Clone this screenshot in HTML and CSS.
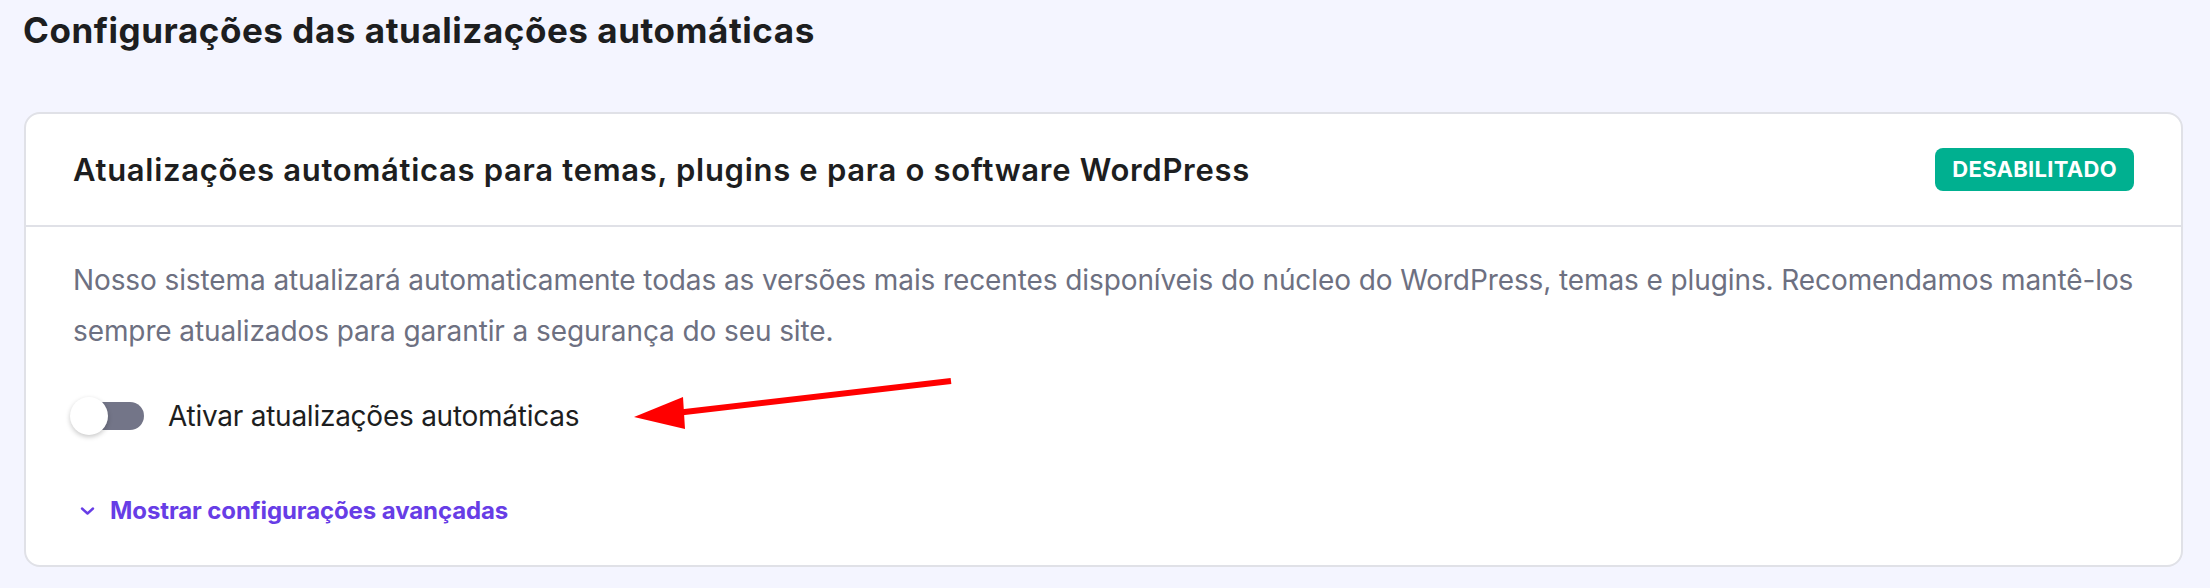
FILE: index.html
```html
<!DOCTYPE html>
<html lang="pt-BR">
<head>
    <meta charset="UTF-8">
    <meta name="viewport" content="width=device-width, initial-scale=1.0">
    <title>Configurações das atualizações automáticas</title>
    <link rel="stylesheet" href="styles.css">
</head>
<body>
    <div class="page">
        <h1 class="page-title">Configurações das atualizações automáticas</h1>

        <section class="card">
            <div class="card-header">
                <h2>Atualizações automáticas para temas, plugins e para o software WordPress</h2>
                <span class="badge">DESABILITADO</span>
            </div>

            <div class="card-body">
                <p class="desc">Nosso sistema atualizará automaticamente todas as versões mais recentes disponíveis do núcleo do WordPress, temas e plugins. Recomendamos mantê-los sempre atualizados para garantir a segurança do seu site.</p>

                <label class="toggle-row">
                    <span class="switch"><span class="knob"></span></span>
                    <span class="toggle-label">Ativar atualizações automáticas</span>
                </label>

                <a class="advanced" href="#">
                    <span class="chevron">
                        <svg width="15" height="10" viewBox="0 0 15 10">
                            <path d="M2 2.5 L7.5 7.5 L13 2.5" fill="none" stroke="#673de6" stroke-width="2.4" stroke-linecap="round" stroke-linejoin="round"/>
                        </svg>
                    </span>
                    Mostrar configurações avançadas
                </a>
            </div>
        </section>
    </div>

    <!-- annotation arrow drawn over the screenshot -->
    <svg class="arrow" width="2210" height="588" viewBox="0 0 2210 588">
        <line x1="951" y1="381" x2="676" y2="413" stroke="#ff0000" stroke-width="6"/>
        <polygon points="634,417 683,397 685,429" fill="#ff0000"/>
    </svg>
</body>
</html>
```

FILE: styles.css
```css
body {
    margin: 0;
    padding: 0;
    background-color: #f4f5ff;
    font-family: Inter, "Noto Sans", sans-serif;
    color: #1d1e20;
}

.page {
    padding: 10px 27px 0 24px;
}

.page-title {
    margin: 0 0 62px -1px;
    font-size: 35px;
    line-height: 40px;
    font-weight: 700;
    letter-spacing: 0.55px;
}

.card {
    background-color: #fff;
    border: 2px solid #e0e1e7;
    border-radius: 16px;
}

.card-header {
    display: flex;
    justify-content: space-between;
    align-items: center;
    min-height: 111px;
    padding: 0 47px;
    border-bottom: 2px solid #e0e1e7;
}

.card-header h2 {
    margin: 0;
    font-size: 31px;
    font-weight: 600;
    letter-spacing: 0.7px;
}

.badge {
    background-color: #00b090;
    color: #fff;
    font-size: 22px;
    font-weight: 700;
    line-height: 43px;
    padding: 0 17px;
    border-radius: 8px;
    letter-spacing: 0.3px;
}

.card-body {
    padding: 28px 30px 38px 47px;
}

.desc {
    margin: 0 0 39px;
    font-size: 28px;
    line-height: 51px;
    font-weight: 400;
    color: #6d7081;
    letter-spacing: -0.1px;
}

.toggle-row {
    display: flex;
    align-items: center;
    gap: 24px;
    cursor: pointer;
}

.switch {
    position: relative;
    width: 74px;
    height: 40px;
    margin-left: -3px;
}

.switch::before {
    content: "";
    position: absolute;
    left: 10px;
    top: 6px;
    width: 64px;
    height: 28px;
    border-radius: 14px;
    background-color: #737588;
}

.knob {
    position: absolute;
    left: 0;
    top: 1px;
    width: 38px;
    height: 38px;
    border-radius: 50%;
    background-color: #fff;
    box-shadow: 0 2px 5px rgba(0, 0, 0, 0.22);
}

.toggle-label {
    font-size: 28px;
    line-height: 40px;
    letter-spacing: -0.25px;
}

.advanced {
    display: flex;
    align-items: center;
    margin-top: 59px;
    font-size: 24px;
    line-height: 32px;
    font-weight: 700;
    color: #673de6;
    text-decoration: none;
    letter-spacing: -0.1px;
}

.advanced .chevron {
    display: flex;
    justify-content: center;
    width: 28px;
    margin-right: 9px;
}

.arrow {
    position: absolute;
    top: 0;
    left: 0;
    pointer-events: none;
}
```
